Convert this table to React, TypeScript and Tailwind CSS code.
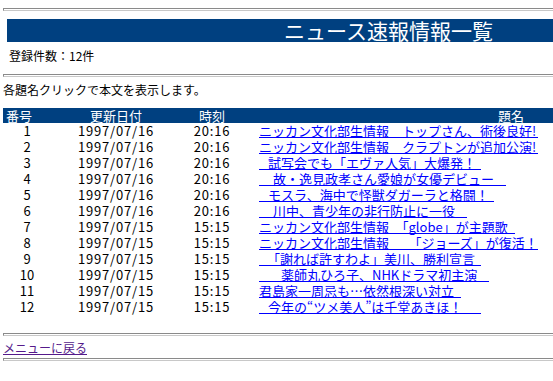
const newsRows = [
  { no: 1, date: "1997/07/16", time: "20:16", title: "ニッカン文化部生情報　トップさん、術後良好!", indent: 0, width: 279 },
  { no: 2, date: "1997/07/16", time: "20:16", title: "ニッカン文化部生情報　クラプトンが追加公演!", indent: 0, width: 279 },
  { no: 3, date: "1997/07/16", time: "20:16", title: "試写会でも「エヴァ人気」大爆発！", indent: 9, width: 222 },
  { no: 4, date: "1997/07/16", time: "20:16", title: "故・逸見政孝さん愛娘が女優デビュー", indent: 14, width: 247 },
  { no: 5, date: "1997/07/16", time: "20:16", title: "モスラ、海中で怪獣ダガーラと格闘！", indent: 9, width: 235 },
  { no: 6, date: "1997/07/16", time: "20:16", title: "川中、青少年の非行防止に一役", indent: 14, width: 208 },
  { no: 7, date: "1997/07/15", time: "15:15", title: "ニッカン文化部生情報　「globe」が主題歌", indent: 0, width: 256 },
  { no: 8, date: "1997/07/15", time: "15:15", title: "ニッカン文化部生情報　　「ジョーズ」が復活！", indent: 0, width: 279 },
  { no: 9, date: "1997/07/15", time: "15:15", title: "「謝れば許すわよ」美川、勝利宣言", indent: 8, width: 222 },
  { no: 10, date: "1997/07/15", time: "15:15", title: "薬師丸ひろ子、NHKドラマ初主演", indent: 22, width: 230 },
  { no: 11, date: "1997/07/15", time: "15:15", title: "君島家一周忌も…依然根深い対立", indent: 0, width: 202 },
  { no: 12, date: "1997/07/15", time: "15:15", title: "今年の“ツメ美人”は千堂あきほ！", indent: 9, width: 222 },
];

// old-style inset rule: dark top edge, light bottom edge
function Rule({ className = "" }: { className?: string }) {
  return (
    <div
      className={`ml-[3px] h-[3px] border-t border-b border-l border-t-[#8a8a8a] border-l-[#8a8a8a] border-b-[#c8c8c8] ${className}`}
    />
  );
}

export default function App() {
  return (
    <div
      lang="ja"
      className="w-[553px] h-[381px] overflow-hidden bg-white text-black pt-[8px] font-['Noto_Sans_CJK_JP','Noto_Sans',sans-serif]"
    >
      <Rule />

      <div className="mt-[8px] ml-[7px] h-[23px] bg-[#004080] pl-[277px] text-[21px] leading-[23px] text-white whitespace-nowrap">
        ニュース速報情報一覧
      </div>

      <div className="mt-[6px] pl-[9px] text-[12px] leading-[16px]">登録件数：12件</div>

      <Rule className="mt-[10px]" />

      <div className="mt-[5px] pl-[3px] text-[12px] leading-[16px]">各題名クリックで本文を表示します。</div>

      <div className="mt-[10px] ml-[3px] text-[13px]">
        <div className="flex h-[15px] bg-[#004080] leading-[15px] text-white whitespace-nowrap">
          <div className="w-[48px] pl-[3px]">番号</div>
          <div className="w-[130px] text-center">更新日付</div>
          <div className="w-[62px] text-center">時刻</div>
          <div className="flex-1 pl-[255px]">題名</div>
        </div>
        {newsRows.map((row) => (
          <div key={row.no} className="flex h-[16px] leading-[16px] whitespace-nowrap">
            <div className="w-[48px] text-center">{row.no}</div>
            <div className="w-[130px] text-center tracking-[0.8px]">{row.date}</div>
            <div className="w-[62px] text-center tracking-[0.8px]">{row.time}</div>
            <div className="flex-1 pl-[16px]">
              <a
                href="#"
                className="inline-block h-[14px] border-b border-[#0000ff] text-[#0000ff] leading-[14px]"
                style={{ width: row.width, paddingLeft: row.indent }}
              >
                {row.title}
              </a>
            </div>
          </div>
        ))}
      </div>

      <Rule className="mt-[18px]" />

      <div className="mt-[4px] pl-[3px] text-[12px] leading-[16px]">
        <a href="#" className="inline-block h-[14px] border-b border-[#551a8b] text-[#551a8b] leading-[14px]">
          メニューに戻る
        </a>
      </div>

      <Rule className="mt-[2px]" />
    </div>
  );
}
